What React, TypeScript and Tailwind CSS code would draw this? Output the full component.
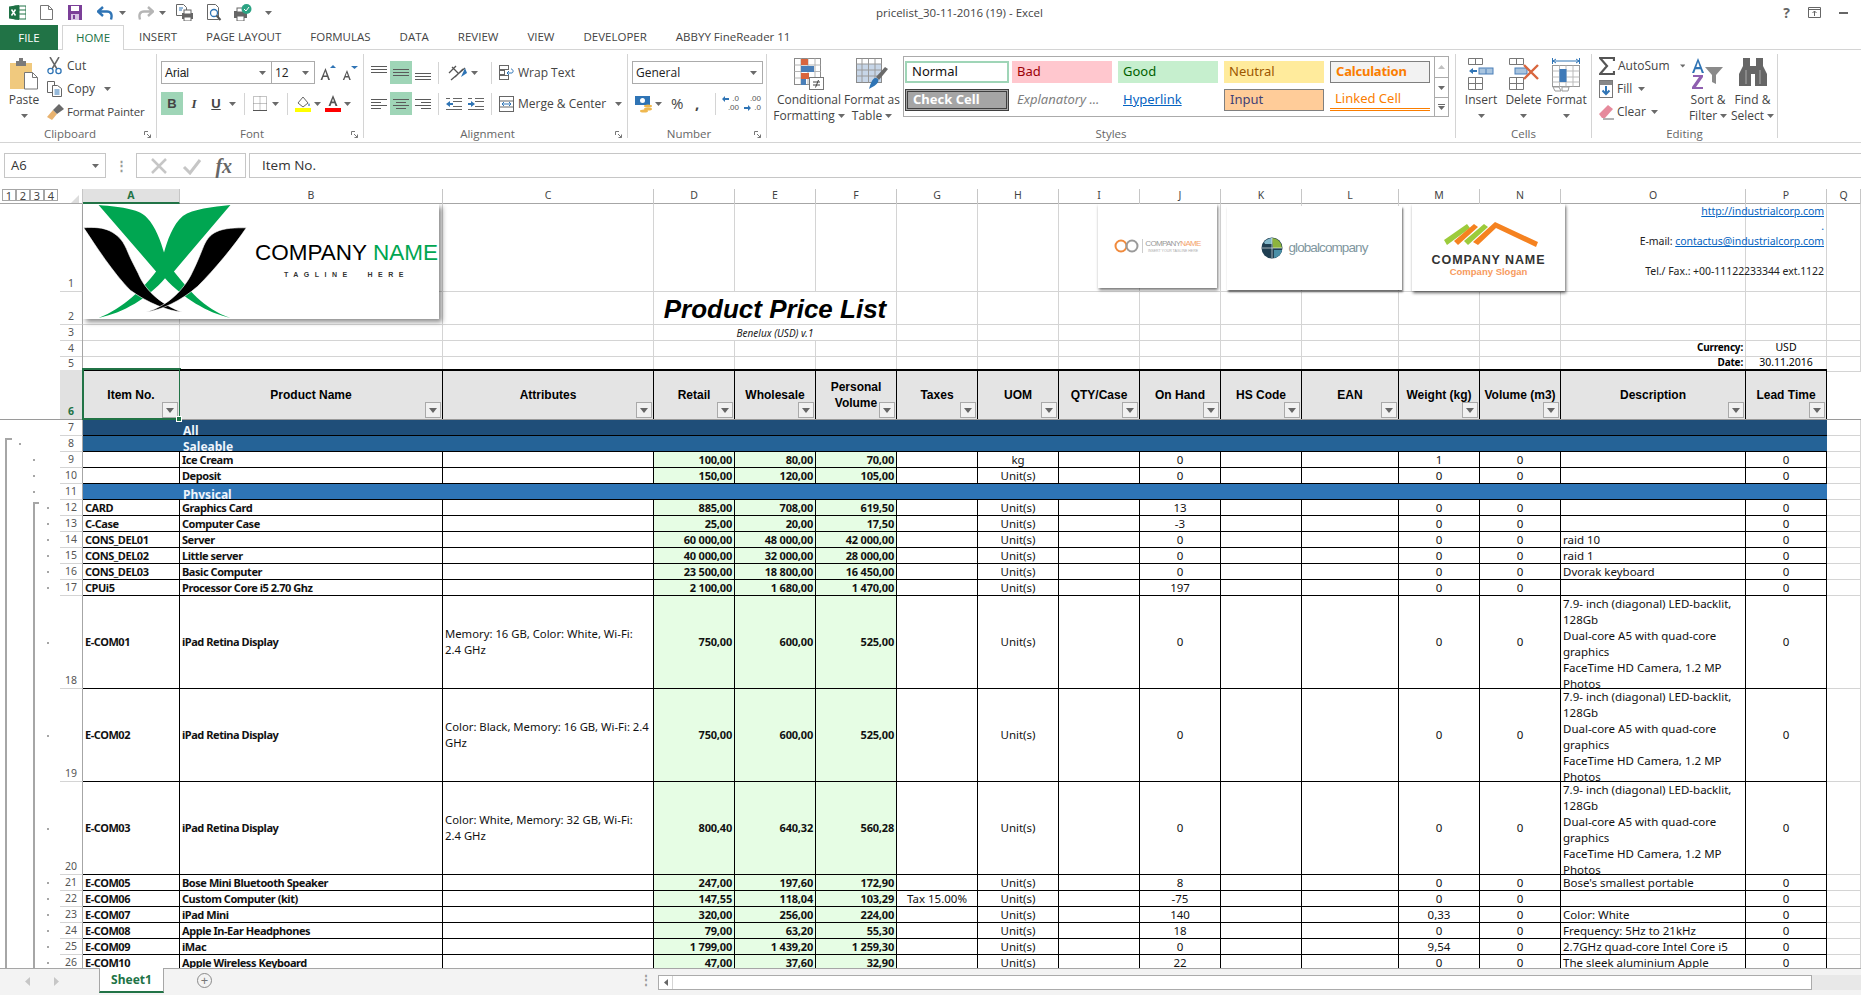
import React from "react";

const rowCols =
    "grid grid-cols-[60px_23px_97px_263px_211px_81px_81px_81px_81px_81px_81px_81px_81px_97px_81px_81px_185px_81px_1fr]";

const letters = ["A", "B", "C", "D", "E", "F", "G", "H", "I", "J", "K", "L", "M", "N", "O", "P", "Q"];
const headers = [
    "Item No.", "Product Name", "Attributes", "Retail", "Wholesale", "Personal Volume", "Taxes", "UOM",
    "QTY/Case", "On Hand", "HS Code", "EAN", "Weight (kg)", "Volume (m3)", "Description", "Lead Time",
];

const ipadDesc = [
    "7.9- inch (diagonal) LED-backlit,",
    "128Gb",
    "Dual-core A5 with quad-core",
    "graphics",
    "FaceTime HD Camera, 1.2 MP",
    "Photos",
];

type Row = {
    n: number;
    level: 1 | 2 | 3;
    tall?: boolean;
    cells: string[];
    desc?: string[];
};

const u = "Unit(s)";
const rows: Row[] = [
    { n: 9, level: 2, cells: ["", "Ice Cream", "", "100,00", "80,00", "70,00", "", "kg", "", "0", "", "", "1", "0", "", "0"] },
    { n: 10, level: 2, cells: ["", "Deposit", "", "150,00", "120,00", "105,00", "", u, "", "0", "", "", "0", "0", "", "0"] },
    { n: 0, level: 2, cells: ["Physical"] },
    { n: 12, level: 3, cells: ["CARD", "Graphics Card", "", "885,00", "708,00", "619,50", "", u, "", "13", "", "", "0", "0", "", "0"] },
    { n: 13, level: 3, cells: ["C-Case", "Computer Case", "", "25,00", "20,00", "17,50", "", u, "", "-3", "", "", "0", "0", "", "0"] },
    { n: 14, level: 3, cells: ["CONS_DEL01", "Server", "", "60 000,00", "48 000,00", "42 000,00", "", u, "", "0", "", "", "0", "0", "raid 10", "0"] },
    { n: 15, level: 3, cells: ["CONS_DEL02", "Little server", "", "40 000,00", "32 000,00", "28 000,00", "", u, "", "0", "", "", "0", "0", "raid 1", "0"] },
    { n: 16, level: 3, cells: ["CONS_DEL03", "Basic Computer", "", "23 500,00", "18 800,00", "16 450,00", "", u, "", "0", "", "", "0", "0", "Dvorak keyboard", "0"] },
    { n: 17, level: 3, cells: ["CPUi5", "Processor Core i5 2.70 Ghz", "", "2 100,00", "1 680,00", "1 470,00", "", u, "", "197", "", "", "0", "0", "", "0"] },
    { n: 18, level: 3, tall: true, desc: ipadDesc, cells: ["E-COM01", "iPad Retina Display", "Memory: 16 GB, Color: White, Wi-Fi:\n2.4 GHz", "750,00", "600,00", "525,00", "", u, "", "0", "", "", "0", "0", "", "0"] },
    { n: 19, level: 3, tall: true, desc: ipadDesc, cells: ["E-COM02", "iPad Retina Display", "Color: Black, Memory: 16 GB, Wi-Fi: 2.4\nGHz", "750,00", "600,00", "525,00", "", u, "", "0", "", "", "0", "0", "", "0"] },
    { n: 20, level: 3, tall: true, desc: ipadDesc, cells: ["E-COM03", "iPad Retina Display", "Color: White, Memory: 32 GB, Wi-Fi:\n2.4 GHz", "800,40", "640,32", "560,28", "", u, "", "0", "", "", "0", "0", "", "0"] },
    { n: 21, level: 3, cells: ["E-COM05", "Bose Mini Bluetooth Speaker", "", "247,00", "197,60", "172,90", "", u, "", "8", "", "", "0", "0", "Bose's smallest portable", "0"] },
    { n: 22, level: 3, cells: ["E-COM06", "Custom Computer (kit)", "", "147,55", "118,04", "103,29", "Tax 15.00%", u, "", "-75", "", "", "0", "0", "", "0"] },
    { n: 23, level: 3, cells: ["E-COM07", "iPad Mini", "", "320,00", "256,00", "224,00", "", u, "", "140", "", "", "0,33", "0", "Color: White", "0"] },
    { n: 24, level: 3, cells: ["E-COM08", "Apple In-Ear Headphones", "", "79,00", "63,20", "55,30", "", u, "", "18", "", "", "0", "0", "Frequency: 5Hz to 21kHz", "0"] },
    { n: 25, level: 3, cells: ["E-COM09", "iMac", "", "1 799,00", "1 439,20", "1 259,30", "", u, "", "0", "", "", "9,54", "0", "2.7GHz quad-core Intel Core i5", "0"] },
    { n: 26, level: 3, cells: ["E-COM10", "Apple Wireless Keyboard", "", "47,00", "37,60", "32,90", "", u, "", "22", "", "", "0", "0", "The sleek aluminium Apple", "0"] },
];

const Caret = ({ className = "" }: { className?: string }) => (
    <svg width="7" height="4" viewBox="0 0 7 4" className={className}>
        <path d="M0 0h7L3.500 4z" fill="#6a6a6a" />
    </svg>
);

const Lines = ({ items }: { items: [number, number, number][] }) => (
    <svg width="18" height="18" viewBox="0 0 18 18">
        {items.map(([x, y, w], i) => (
            <rect key={i} x={x} y={y} width={w} height="1" fill="#5a5a5a" />
        ))}
    </svg>
);

const Icon = ({ name }: { name: string }) => {
    switch (name) {
        case "excel":
            return (
                <svg width="17" height="15" viewBox="0 0 17 15">
                    <rect x="6" y="1" width="11" height="13" fill="#fff" stroke="#217346" />
                    <path d="M10 1v13M6 5h11M6 9h11" stroke="#217346" strokeWidth="1" />
                    <path d="M0 1.500L10 0v15L0 13.500z" fill="#1e7145" />
                    <path d="M2.500 4.500l4 6M6.500 4.500l-4 6" stroke="#fff" strokeWidth="1.500" />
                </svg>
            );
        case "new":
            return (
                <svg width="13" height="15" viewBox="0 0 13 15">
                    <path d="M.5.5h8l4 4v10H.5zM8.500.5v4h4" fill="#fff" stroke="#777" />
                </svg>
            );
        case "save":
            return (
                <svg width="14" height="15" viewBox="0 0 14 15">
                    <path d="M0 0h14v15H0z" fill="#7b3f98" />
                    <rect x="3" y="1" width="8" height="5" fill="#fff" />
                    <rect x="3" y="9" width="8" height="6" fill="#d8c4e4" />
                    <rect x="5" y="10" width="2" height="4" fill="#7b3f98" />
                </svg>
            );
        case "undo":
            return (
                <svg width="18" height="16" viewBox="0 0 18 16">
                    <path d="M6 2L1 6.500 6 11M2 6.500h8c4 0 5.500 3 4 8" fill="none" stroke="#2f74b5" strokeWidth="2.400" />
                </svg>
            );
        case "redo":
            return (
                <svg width="18" height="16" viewBox="0 0 18 16">
                    <path d="M12 2l5 4.500L12 11M16 6.500H8c-4 0-5.500 3-4 8" fill="none" stroke="#b5b5b5" strokeWidth="2.400" />
                </svg>
            );
        case "preview":
            return (
                <svg width="17" height="17" viewBox="0 0 17 17">
                    <path d="M.5.5h7l3 3v8H.5z" fill="#fff" stroke="#666" />
                    <rect x="6" y="9" width="11" height="6" fill="#666" />
                    <rect x="8" y="6" width="7" height="4" fill="#fff" stroke="#666" />
                    <rect x="8" y="13" width="7" height="4" fill="#fff" stroke="#666" />
                    <path d="M3 4h4M3 6h3" stroke="#2f74b5" />
                </svg>
            );
        case "print":
            return (
                <svg width="16" height="17" viewBox="0 0 16 17">
                    <path d="M.5.5h8l3 3v12H.5z" fill="#fff" stroke="#666" />
                    <circle cx="7" cy="9" r="3.500" fill="#fff" stroke="#2f74b5" strokeWidth="1.300" />
                    <path d="M9.500 11.500L13.500 16" stroke="#555" strokeWidth="2" />
                </svg>
            );
        case "spell":
            return (
                <svg width="18" height="17" viewBox="0 0 18 17">
                    <rect x="0" y="7" width="13" height="7" fill="#666" />
                    <rect x="3" y="4" width="7" height="4" fill="#fff" stroke="#666" />
                    <rect x="3" y="12" width="7" height="5" fill="#fff" stroke="#666" />
                    <circle cx="12.500" cy="5" r="5" fill="#2ba383" />
                    <path d="M10 5l2 2 3-4" fill="none" stroke="#fff" />
                </svg>
            );
        case "paste":
            return (
                <svg width="30" height="32" viewBox="0 0 30 32">
                    <path d="M1 5h22v26H1z" fill="#f0c97e" />
                    <rect x="7" y="3" width="10" height="5" fill="#7a7a7a" />
                    <rect x="10" y="0" width="4" height="4" fill="#7a7a7a" />
                    <path d="M15.500 14.500h8l5 5v11.500h-13z" fill="#fff" stroke="#777" />
                    <path d="M23.500 14.500v5h5" fill="none" stroke="#777" />
                </svg>
            );
        case "cut":
            return (
                <svg width="15" height="18" viewBox="0 0 15 18">
                    <path d="M3 0l7 12M12 0L5 12" stroke="#666" strokeWidth="1.500" />
                    <circle cx="3.500" cy="14" r="2.600" fill="none" stroke="#2f74b5" strokeWidth="1.300" />
                    <circle cx="11.500" cy="14" r="2.600" fill="none" stroke="#2f74b5" strokeWidth="1.300" />
                </svg>
            );
        case "copy":
            return (
                <svg width="15" height="16" viewBox="0 0 15 16">
                    <path d="M.5.5h7v11h-7z" fill="#fff" stroke="#666" />
                    <path d="M5.500 4.500h5l4 3v8h-9z" fill="#fff" stroke="#666" />
                    <path d="M7.500 9h5M7.500 11h5M7.500 13h5" stroke="#2f74b5" />
                </svg>
            );
        case "painter":
            return (
                <svg width="17" height="16" viewBox="0 0 17 16">
                    <path d="M0 13l6-7 4 4-5 6z" fill="#e9b36f" />
                    <path d="M6 6l6-6 5 5-7 5z" fill="#6a6a6a" />
                </svg>
            );
        case "growA":
            return (
                <svg width="16" height="17" viewBox="0 0 16 17">
                    <path d="M5.500 4L10 16H8.200l-1-3H3.300l-1 3H.5zM3.800 11.500h2.900L5.300 7.300z" fill="#555" />
                    <path d="M10 4l3-3 3 3z" fill="#2f74b5" />
                </svg>
            );
        case "shrinkA":
            return (
                <svg width="16" height="17" viewBox="0 0 16 17">
                    <path d="M5 6l3.800 10H7.300l-.9-2.500H3.200L2.300 16H.8zM3.700 12h2.200L4.800 8.800z" fill="#555" />
                    <path d="M9 2h7l-3.500 3z" fill="#2f74b5" />
                </svg>
            );
        case "borders":
            return (
                <svg width="14" height="15" viewBox="0 0 14 15">
                    <path d="M.5.500h13v14H.5zM7 .5v14M.5 7.500h13" fill="none" stroke="#8a8a8a" strokeDasharray="1 1" />
                    <path d="M0 14.500h14" stroke="#555" />
                </svg>
            );
        case "fill":
            return (
                <svg width="16" height="17" viewBox="0 0 16 17">
                    <path d="M3 8l5-6 5 6-5 4z" fill="#fff" stroke="#666" />
                    <path d="M14 8c1 2 1 3 0 3s-1-1 0-3z" fill="#2f74b5" />
                    <rect x="0" y="13" width="16" height="4" fill="#ffff00" />
                </svg>
            );
        case "fontColor":
            return (
                <svg width="16" height="17" viewBox="0 0 16 17">
                    <path d="M8 0l4.500 11H10.500l-1-2.800h-3l-1 2.800H3.500zM7 6.500h2L8 3.500z" fill="#555" fillRule="evenodd" />
                    <rect x="0" y="13" width="16" height="4" fill="#ff0000" />
                </svg>
            );
        case "orient":
            return (
                <svg width="22" height="18" viewBox="0 0 22 18">
                    <path d="M2 9l7-7M5 3l6 6M8 13l8-8M4 16l14-12" stroke="#555" strokeWidth="1.300" fill="none" />
                    <path d="M14 13l4-9 2 5z" fill="#2f74b5" />
                </svg>
            );
        case "outdent":
        case "indent":
            return (
                <svg width="16" height="12" viewBox="0 0 16 12">
                    <path d="M7 .5h9M7 3.500h9M7 8.500h9M0 11.500h16M0 .5h4" stroke="#666" />
                    {name === "outdent" ? <path d="M0 6l4-3v2h3v2H4v2z" fill="#2f74b5" /> : <path d="M7 6L3 3v2H0v2h3v2z" fill="#2f74b5" />}
                </svg>
            );
        case "wrap":
            return (
                <svg width="15" height="16" viewBox="0 0 15 16">
                    <rect x=".5" y=".5" width="9" height="4" fill="none" stroke="#666" />
                    <rect x=".5" y="5.500" width="5" height="4" fill="none" stroke="#666" />
                    <rect x=".5" y="10.500" width="9" height="4" fill="none" stroke="#666" />
                    <path d="M8 8h5c2-1 1-4-1-4M10 6L8 8l2 2" fill="none" stroke="#2f74b5" />
                </svg>
            );
        case "merge":
            return (
                <svg width="15" height="16" viewBox="0 0 15 16">
                    <rect x=".5" y=".5" width="14" height="15" fill="#fff" stroke="#666" />
                    <path d="M.5 5h14M.5 11h14" stroke="#666" />
                    <path d="M3 8h9M3 8l2-2M3 8l2 2M12 8l-2-2M12 8l-2 2" stroke="#2f74b5" fill="none" />
                </svg>
            );
        case "money":
            return (
                <svg width="18" height="18" viewBox="0 0 18 18">
                    <rect x="0" y="1" width="15" height="9" fill="#2f74b5" />
                    <circle cx="7.500" cy="5.500" r="2.500" fill="#fff" />
                    <ellipse cx="13" cy="11" rx="4" ry="1.500" fill="#efb84f" />
                    <ellipse cx="13" cy="14" rx="4" ry="1.500" fill="#efb84f" />
                    <ellipse cx="9" cy="16" rx="4" ry="1.500" fill="#efb84f" />
                </svg>
            );
        case "incDec":
            return (
                <div className="relative w-[17px] h-[17px] text-[8px] leading-[8px] text-[#555] font-['Liberation_Sans']">
                    <span className="absolute right-0 top-0">.0</span>
                    <span className="absolute right-0 bottom-0">.00</span>
                    <svg width="7" height="6" viewBox="0 0 7 6" className="absolute left-0 top-[1px]"><path d="M0 3l3-3v2h4v2H3v2z" fill="#2f74b5" /></svg>
                </div>
            );
        case "decDec":
            return (
                <div className="relative w-[17px] h-[17px] text-[8px] leading-[8px] text-[#555] font-['Liberation_Sans']">
                    <span className="absolute right-0 top-0">.00</span>
                    <span className="absolute right-0 bottom-0">.0</span>
                    <svg width="7" height="6" viewBox="0 0 7 6" className="absolute left-0 bottom-[1px]"><path d="M7 3L4 0v2H0v2h4v2z" fill="#2f74b5" /></svg>
                </div>
            );
        case "cond":
            return (
                <svg width="30" height="32" viewBox="0 0 30 32">
                    <rect x=".5" y=".5" width="26" height="26" fill="#fff" stroke="#8a8a8a" />
                    <path d="M7 .5v26M14 .5v26M21 .5v26M.5 7h26M.5 13.500h26M.5 20h26" stroke="#b5b5b5" />
                    <rect x="7" y="1" width="7" height="6" fill="#d9663e" />
                    <rect x="7" y="8" width="13" height="6" fill="#4a7fb8" />
                    <rect x="7" y="15" width="8" height="6" fill="#d9663e" />
                    <rect x="7" y="21" width="5" height="6" fill="#4a7fb8" />
                    <rect x="15.500" y="19.500" width="14" height="12" fill="#fff" stroke="#777" />
                    <path d="M19 24h7M19 27h7M24.500 22l-3 7.500" stroke="#444" fill="none" />
                </svg>
            );
        case "table":
            return (
                <svg width="32" height="32" viewBox="0 0 32 32">
                    <rect x=".5" y=".5" width="25" height="24" fill="#c7d6e8" stroke="#8a8a8a" />
                    <rect x="1" y="1" width="24" height="5" fill="#fff" />
                    <path d="M6 .5v24M12.500 .5v24M19 .5v24M.5 6h25M.5 12h25M.5 18h25" stroke="#9a9a9a" />
                    <path d="M29 9l3 2-9 11-3-3z" fill="#6a6a6a" />
                    <path d="M19 20c3 0 4 2 3 4-1 3-6 5-9 7 1-4 3-10 6-11z" fill="#2f74b5" />
                </svg>
            );
        case "insert":
            return (
                <svg width="27" height="32" viewBox="0 0 27 32">
                    <path d="M.5.5h14v6H.5zM7.500.5v6M.5 19.500h14v12H.5zM7.500 19.500v12M.5 25.500h14" fill="#fff" stroke="#777" />
                    <rect x="11" y="10" width="14" height="6" fill="#a8c4df" stroke="#4a7fb8" />
                    <path d="M18 11v5" stroke="#4a7fb8" />
                    <path d="M1 13l4-3v2h4v2H5v2z" fill="#2f74b5" />
                </svg>
            );
        case "delete":
            return (
                <svg width="30" height="32" viewBox="0 0 30 32">
                    <path d="M.5.5h14v6H.5zM7.500.5v6M.5 19.500h14v12H.5zM7.500 19.500v12M.5 25.500h14" fill="#fff" stroke="#777" />
                    <rect x="6" y="10" width="12" height="6" fill="#a8c4df" stroke="#4a7fb8" />
                    <path d="M15 7l14 14M29 7L15 21" stroke="#d9663e" strokeWidth="2.400" />
                </svg>
            );
        case "format":
            return (
                <svg width="29" height="34" viewBox="0 0 29 34">
                    <path d="M1 3h26M1 3l3-2M1 3l3 2M27 3l-3-2M27 3l-3 2M.5 0v6M27.500 0v6" stroke="#2f74b5" fill="none" />
                    <rect x=".5" y="7.500" width="27" height="21" fill="#fff" stroke="#999" />
                    <path d="M7.500 7.500v21M14 7.500v21M21 7.500v21M.5 13h27M.5 19h27M.5 24h27" stroke="#bbb" />
                    <rect x="7.500" y="11" width="7" height="13" fill="#3f7ab8" />
                    <path d="M1 29h6l2 4H3zM10 29h7l-1 4h-6z" fill="#fff" stroke="#999" />
                </svg>
            );
        case "sum":
            return (
                <svg width="16" height="18" viewBox="0 0 16 18">
                    <path d="M15 4V1H1l7 8-7 8h14v-3" fill="none" stroke="#555" strokeWidth="2.200" />
                </svg>
            );
        case "fillDown":
            return (
                <svg width="14" height="18" viewBox="0 0 14 18">
                    <rect x=".5" y=".5" width="13" height="17" fill="#fff" stroke="#777" />
                    <rect x="1" y="1" width="12" height="4" fill="#888" />
                    <path d="M7 6v8M3.500 10.500L7 14l3.500-3.500" fill="none" stroke="#2f74b5" strokeWidth="2" />
                </svg>
            );
        case "clear":
            return (
                <svg width="15" height="16" viewBox="0 0 15 16">
                    <path d="M0 10l9-9 5 4-8 9H3z" fill="#e68a9c" />
                    <path d="M4 15h11" stroke="#666" />
                </svg>
            );
        case "sort":
            return (
                <svg width="32" height="32" viewBox="0 0 32 32">
                    <path d="M6 0l6 15H9.800l-1.300-3.800H3.500L2.200 15H0zM4.300 9h3.400L6 4z" fill="#2f74b5" fillRule="evenodd" />
                    <path d="M1 17h10v2L4 29h7v2H0v-2l7-10H1z" fill="#8f5fb0" />
                    <path d="M13 9h18l-7 8v9l-4-2v-7z" fill="#8a8a8a" />
                </svg>
            );
        case "find":
            return (
                <svg width="28" height="28" viewBox="0 0 28 28">
                    <path d="M4 0h7v8h6V0h7v8l4 8v12H16V16h-4v12H0V16l4-8z" fill="#666" />
                    <path d="M7 12v14M21 12v14" stroke="#aaa" />
                </svg>
            );
        default:
            return null;
    }
};

const Group = ({ w, label, launcher, children }: { w: string; label: string; launcher?: boolean; children: React.ReactNode }) => (
    <div className={`${w} h-[84px] flex flex-col border-r border-[#d4d4d4] shrink-0`}>
        <div className="h-[72px] flex">{children}</div>
        <div className={`h-[12px] pt-[1px] flex justify-center relative text-[11.500px] leading-[14px] text-[#666] ${launcher ? "pr-[16px]" : ""}`}>
            {label}
            {launcher && (
                <svg width="7" height="7" viewBox="0 0 7 7" className="absolute right-[5px] top-[5px]">
                    <path d="M.5 4V.5H4M3 3l3.500 3.500M6.500 3.500v3h-3" fill="none" stroke="#777" />
                </svg>
            )}
        </div>
    </div>
);

const BigBtn = ({ icon, w, lines, caretInline }: { icon: string; w: string; lines: string[]; caretInline?: boolean }) => (
    <div className={`${w} flex flex-col items-center text-[12px] leading-[16px] text-[#444] shrink-0`}>
        <div className="h-[38px] pt-[4px] flex items-start justify-center">
            <Icon name={icon} />
        </div>
        {lines.map((l, i) => (
            <div key={l} className="whitespace-nowrap flex items-center gap-[3px]">
                {l}
                {caretInline && i === lines.length - 1 && <Caret />}
            </div>
        ))}
        {!caretInline && <Caret className="mt-[6px]" />}
    </div>
);

const SmallBtn = ({ icon, label, caret, gap = "gap-[5px]", labelClass = "" }: { icon: string; label: string; caret?: boolean; gap?: string; labelClass?: string }) => (
    <div className={`h-[23px] flex items-center ${gap} text-[12px] text-[#444] whitespace-nowrap`}>
        <Icon name={icon} />
        <span className={labelClass}>{label}</span>
        {caret && <Caret className="ml-[2px]" />}
    </div>
);

const Sep = () => <div className="w-[1px] h-[22px] bg-[#d4d4d4] shrink-0" />;

const AlignBtn = ({ items, on }: { items: [number, number, number][]; on?: boolean }) => (
    <div className={`w-[22px] h-[23px] flex items-center justify-center shrink-0 ${on ? "bg-[#9fd5b7]" : ""}`}>
        <Lines items={items} />
    </div>
);

const StyleCell = ({ children, className }: { children: React.ReactNode; className: string }) => (
    <div className={`h-[22px] flex items-center px-[5px] text-[13px] whitespace-nowrap ${className}`}>{children}</div>
);

const Ribbon = () => (
    <div className="h-[93px] pt-[4px] flex border-b border-[#d4d4d4] font-['Open_Sans',sans-serif]">
        <Group w="w-[157px]" label="Clipboard" launcher>
            <div className="w-[47px] pl-[3px]">
                <BigBtn icon="paste" w="w-[42px]" lines={["Paste"]} />
            </div>
            <div className="flex flex-col">
                <SmallBtn icon="cut" label="Cut" />
                <div className="flex items-center">
                    <SmallBtn icon="copy" label="Copy" />
                    <Caret className="ml-[9px]" />
                </div>
                <SmallBtn icon="painter" label="Format Painter" gap="gap-[3px]" labelClass="text-[11.500px] tracking-[-0.2px]" />
            </div>
        </Group>

        <Group w="w-[207px]" label="Font" launcher>
            <div className="pl-[4px] pt-[7px] flex flex-col gap-[8px]">
                <div className="h-[23px] flex items-center">
                    <div className="w-[111px] h-[23px] border border-[#ababab] flex items-center justify-between px-[3px] pr-[5px] font-['Liberation_Sans'] text-[12px] text-[#222]">
                        Arial
                        <Caret />
                    </div>
                    <div className="w-[43px] h-[23px] border border-l-0 border-[#ababab] flex items-center justify-between px-[3px] pr-[5px] text-[12px] text-[#222]">
                        12
                        <Caret />
                    </div>
                    <div className="ml-[5px] flex gap-[6px]">
                        <Icon name="growA" />
                        <Icon name="shrinkA" />
                    </div>
                </div>
                <div className="h-[23px] flex items-center text-[#444] font-['Liberation_Sans'] text-[13px]">
                    <div className="w-[22px] h-[23px] bg-[#9fd5b7] flex items-center justify-center font-bold">B</div>
                    <div className="w-[22px] text-center italic font-bold font-['Liberation_Serif']">I</div>
                    <div className="w-[22px] text-center underline font-bold">U</div>
                    <Caret className="mr-[8px] ml-[2px]" />
                    <Sep />
                    <div className="w-[42px] pl-[8px] flex items-center gap-[5px]">
                        <Icon name="borders" />
                        <Caret />
                    </div>
                    <Sep />
                    <div className="w-[34px] pl-[7px] flex items-center gap-[3px]">
                        <Icon name="fill" />
                        <Caret />
                    </div>
                    <div className="pl-[3px] flex items-center gap-[3px]">
                        <Icon name="fontColor" />
                        <Caret />
                    </div>
                </div>
            </div>
        </Group>

        <Group w="w-[264px]" label="Alignment" launcher>
            <div className="pl-[4px] pt-[7px] flex flex-col gap-[8px]">
                <div className="h-[23px] flex items-center">
                    <AlignBtn items={[[1, 2, 16], [1, 5, 16], [1, 8, 16]]} />
                    <AlignBtn on items={[[1, 5, 16], [1, 8, 16], [1, 11, 16]]} />
                    <AlignBtn items={[[1, 9, 16], [1, 12, 16], [1, 15, 16]]} />
                    <div className="w-[4px]" />
                    <Sep />
                    <div className="w-[52px] pl-[8px] flex items-center gap-[2px]">
                        <Icon name="orient" />
                        <Caret />
                    </div>
                    <Sep />
                    <div className="pl-[7px]">
                        <SmallBtn icon="wrap" label="Wrap Text" gap="gap-[4px]" />
                    </div>
                </div>
                <div className="h-[23px] flex items-center">
                    <AlignBtn items={[[1, 4, 16], [1, 7, 10], [1, 10, 16], [1, 13, 10]]} />
                    <AlignBtn on items={[[1, 4, 16], [4, 7, 10], [1, 10, 16], [4, 13, 10]]} />
                    <AlignBtn items={[[1, 4, 16], [7, 7, 10], [1, 10, 16], [7, 13, 10]]} />
                    <div className="w-[4px]" />
                    <Sep />
                    <div className="w-[52px] pl-[7px] flex items-center gap-[6px]">
                        <Icon name="outdent" />
                        <Icon name="indent" />
                    </div>
                    <Sep />
                    <div className="pl-[7px] flex items-center">
                        <SmallBtn icon="merge" label="Merge & Center" gap="gap-[4px]" />
                        <Caret className="ml-[9px]" />
                    </div>
                </div>
            </div>
        </Group>

        <Group w="w-[139px]" label="Number" launcher>
            <div className="pl-[4px] pt-[7px] flex flex-col gap-[8px]">
                <div className="w-[131px] h-[23px] border border-[#ababab] flex items-center justify-between px-[3px] pr-[5px] text-[12px] text-[#222]">
                    General
                    <Caret />
                </div>
                <div className="h-[23px] flex items-center text-[#444]">
                    <div className="w-[39px] pl-[3px] flex items-center gap-[2px]">
                        <Icon name="money" />
                        <Caret />
                    </div>
                    <span className="w-[24px] text-[15px]">%</span>
                    <span className="w-[20px] font-bold text-[15px]">,</span>
                    <Sep />
                    <div className="pl-[6px] flex gap-[5px]">
                        <Icon name="incDec" />
                        <Icon name="decDec" />
                    </div>
                </div>
            </div>
        </Group>

        <Group w="w-[689px]" label="Styles">
            <BigBtn icon="cond" w="w-[75px] pl-[9px]" lines={["Conditional", "Formatting"]} caretInline />
            <BigBtn icon="table" w="w-[60px]" lines={["Format as", "Table"]} caretInline />
            <div className="w-[546px] h-[61px] mt-[2px] ml-[1px] border border-[#ababab] flex justify-between">
                <div className="pl-[1px] pt-[4px] grid grid-cols-[101px_100px_100px_100px_100px] gap-x-[6px] gap-y-[6px] content-start font-['Noto_Sans',sans-serif]">
                    <StyleCell className="border-2 border-[#9fd5b7] text-[#111] -mr-[3px]">Normal</StyleCell>
                    <StyleCell className="bg-[#ffc7ce] text-[#9c0006]">Bad</StyleCell>
                    <StyleCell className="bg-[#c6efce] text-[#006100]">Good</StyleCell>
                    <StyleCell className="bg-[#ffeb9c] text-[#9c5700]">Neutral</StyleCell>
                    <StyleCell className="bg-[#f2f2f2] border border-[#7f7f7f] text-[#fa7d00] font-bold tracking-[-0.2px]">Calculation</StyleCell>
                    <StyleCell className="bg-[#a5a5a5] border-[3px] border-double border-[#3f3f3f] text-white font-bold -mr-[3px]">Check Cell</StyleCell>
                    <StyleCell className="italic text-[#7f7f7f]">Explanatory ...</StyleCell>
                    <StyleCell className="text-[#0563c1] underline">Hyperlink</StyleCell>
                    <StyleCell className="bg-[#ffcc99] border border-[#7f7f7f] text-[#3f3f76]">Input</StyleCell>
                    <StyleCell className="border-b-[3px] border-double border-[#fa7d00] text-[#fa7d00]">Linked Cell</StyleCell>
                </div>
                <div className="w-[14px] border-l border-[#ababab] flex flex-col">
                    <div className="h-[21px] border-b border-[#ababab] flex items-center justify-center">
                        <svg width="7" height="4" viewBox="0 0 7 4"><path d="M0 4h7L3.500 0z" fill="#c0c0c0" /></svg>
                    </div>
                    <div className="h-[20px] border-b border-[#ababab] flex items-center justify-center">
                        <Caret />
                    </div>
                    <div className="flex-1 flex flex-col items-center justify-center gap-[1px]">
                        <div className="w-[7px] h-[1px] bg-[#6a6a6a]" />
                        <Caret />
                    </div>
                </div>
            </div>
        </Group>

        <Group w="w-[136px]" label="Cells">
            <div className="pl-[4px] flex">
                <BigBtn icon="insert" w="w-[42px]" lines={["Insert"]} />
                <BigBtn icon="delete" w="w-[43px]" lines={["Delete"]} />
                <BigBtn icon="format" w="w-[43px]" lines={["Format"]} />
            </div>
        </Group>

        <Group w="w-[186px]" label="Editing">
            <div className="pl-[7px] w-[93px] flex flex-col shrink-0">
                <div className="flex items-center">
                    <SmallBtn icon="sum" label="AutoSum" gap="gap-[3px]" />
                    <Caret className="ml-[10px]" />
                </div>
                <SmallBtn icon="fillDown" label="Fill" caret gap="gap-[4px]" />
                <SmallBtn icon="clear" label="Clear" caret gap="gap-[3px]" />
            </div>
            <BigBtn icon="sort" w="w-[46px]" lines={["Sort &", "Filter"]} caretInline />
            <BigBtn icon="find" w="w-[43px]" lines={["Find &", "Select"]} caretInline />
        </Group>
    </div>
);

const FormulaBar = () => (
    <div className="mt-[10px] h-[25px] flex pl-[4px] text-[13px] text-[#333] font-['Open_Sans',sans-serif]">
        <div className="w-[102px] border border-[#c6c6c6] flex items-center justify-between pl-[6px] pr-[6px]">
            A6
            <Caret />
        </div>
        <div className="w-[30px] flex items-center justify-center text-[#999] font-bold">⋮</div>
        <div className="w-[110px] border border-[#c6c6c6] flex items-center justify-around px-[6px]">
            <svg width="18" height="18" viewBox="0 0 18 18"><path d="M2 2l14 14M16 2L2 16" stroke="#c6c6c6" strokeWidth="2.500" /></svg>
            <svg width="20" height="18" viewBox="0 0 20 18"><path d="M2 10l6 6L18 3" fill="none" stroke="#c6c6c6" strokeWidth="3" /></svg>
            <span className="font-['Liberation_Serif'] italic font-bold text-[20px] text-[#666]">fx</span>
        </div>
        <div className="flex-1 ml-[3px] border border-r-0 border-[#c6c6c6] flex items-center pl-[12px] text-[13.500px]">Item No.</div>
    </div>
);

const ColumnHeader = () => (
    <div className={`${rowCols} mt-[11px] h-[15px] shrink-0 border-b border-[#a6a6a6] text-[10.500px] leading-[13px] text-[#444] font-['Noto_Sans',sans-serif]`}>
        <div className="flex items-start pl-[2px] gap-0">
            {[1, 2, 3, 4].map((n) => (
                <div key={n} className="w-[14px] h-[12px] border border-[#a6a6a6] text-center leading-[11px] text-[11px]">{n}</div>
            ))}
        </div>
        <div className="flex justify-end items-end pr-[3px] pb-[1px] border-r border-[#c6c6c6]">
            <svg width="8" height="8" viewBox="0 0 8 8"><path d="M8 0v8H0z" fill="#dcdcdc" /></svg>
        </div>
        {letters.map((l, i) => (
            <div
                key={l}
                className={`text-center border-r border-[#c6c6c6] ${i === 0 ? "bg-[#e1e1e1] text-[#217346] font-bold border-b-2 border-b-[#217346]" : ""}`}
            >
                {l}
            </div>
        ))}
    </div>
);

const Gutter = ({ level }: { level?: 1 | 2 | 3 }) => (
    <div className="flex items-center">
        {level === 1 && <div className="ml-[19px] w-[2px] h-[2px] bg-[#a6a6a6]" />}
        {level === 2 && <div className="ml-[33px] w-[2px] h-[2px] bg-[#a6a6a6]" />}
        {level === 3 && <div className="ml-[47px] w-[2px] h-[2px] bg-[#a6a6a6]" />}
    </div>
);

const RowNum = ({ n, className = "" }: { n: number; className?: string }) => (
    <div className={`flex items-end justify-center border-r border-b border-[#d4d4d4] border-r-[#a6a6a6] text-[#555] text-[10.500px] leading-[15px] ${className}`}>{n}</div>
);

const Blank = ({ className = "" }: { className?: string }) => (
    <div className={`border-r border-b border-[#d4d4d4] ${className}`} />
);

const FilterBtn = () => (
    <div className="absolute right-[1px] bottom-[1px] w-[16px] h-[16px] bg-[#f1f1f1] border border-[#a9a9a9] flex items-center justify-center">
        <svg width="8" height="5" viewBox="0 0 8 5"><path d="M0 0h8L4 5z" fill="#666" /></svg>
    </div>
);

const TopRows = () => (
    <>
        <div className={`${rowCols} h-[88px]`}>
            <Gutter />
            <RowNum n={1} />
            {letters.slice(0, 15).map((l) => <Blank key={l} />)}
            <div className="border-r border-b border-[#d4d4d4] pr-[2px] flex flex-col items-end whitespace-nowrap text-[10.500px] tracking-[-0.05px] leading-[15px] text-[#222]">
                <a className="text-[#0563c1] underline">http://industrialcorp.com</a>
                <span className="text-[#0563c1]">.</span>
                <span>E-mail: <a className="text-[#0563c1] underline">contactus@industrialcorp.com</a></span>
                <span className="h-[15px]" />
                <span>Tel./ Fax.: +00-11122233344 ext.1122</span>
            </div>
            <Blank />
        </div>
        <div className={`${rowCols} h-[33px]`}>
            <Gutter />
            <RowNum n={2} />
            <Blank /><Blank /><Blank />
            <div className="col-span-3 border-r border-b border-[#d4d4d4] flex items-end justify-center font-['Liberation_Sans'] font-bold italic text-[26px] leading-[29px] whitespace-nowrap text-black">
                Product Price List
            </div>
            {letters.slice(6, 17).map((l) => <Blank key={l} />)}
        </div>
        <div className={`${rowCols} h-[15px]`}>
            <Gutter />
            <RowNum n={3} />
            <Blank /><Blank /><Blank />
            <div className="col-span-3 border-r border-b border-[#d4d4d4] flex items-center justify-center italic text-[10px] leading-[14px] text-[#222]">
                Benelux (USD) v.1
            </div>
            {letters.slice(6, 17).map((l) => <Blank key={l} />)}
        </div>
        <div className={`${rowCols} h-[15px]`}>
            <Gutter />
            <RowNum n={4} />
            {letters.slice(0, 14).map((l) => <Blank key={l} />)}
            <div className="border-r border-b border-[#d4d4d4] flex items-center justify-end pr-[2px] font-bold text-[10px] tracking-[-0.2px]">Currency:</div>
            <div className="border-r border-b border-[#d4d4d4] flex items-center justify-center text-[10.500px]">USD</div>
            <Blank />
        </div>
        <div className={`${rowCols} h-[15px]`}>
            <Gutter />
            <RowNum n={5} />
            {letters.slice(0, 14).map((l) => <Blank key={l} />)}
            <div className="border-r border-b border-[#d4d4d4] flex items-center justify-end pr-[2px] font-bold text-[10px] tracking-[-0.2px]">Date:</div>
            <div className="border-r border-b border-[#d4d4d4] flex items-center justify-center text-[10.500px]">30.11.2016</div>
            <Blank />
        </div>
    </>
);

const HeaderRow = () => (
    <div className={`${rowCols} h-[50px] border-b border-[#9a9a9a]`}>
        <Gutter />
        <div className="bg-[#e1e1e1] border-r border-[#a6a6a6] flex items-end justify-center text-[#217346] font-bold text-[10.500px] leading-[15px]">6</div>
        {headers.map((h, i) => (
            <div
                key={h}
                className={`relative bg-[#e4e4e4] border-t-2 border-t-black -mt-[1px] border-r border-r-black flex items-center justify-center text-center font-['Liberation_Sans'] font-bold text-[12px] leading-[16px] text-black ${
                    i === 0 ? "outline-2 -outline-offset-1 outline-[#217346]" : ""
                }`}
            >
                {h}
                <FilterBtn />
            </div>
        ))}
        <div />
    </div>
);

const Section = ({ n, label, bg, level }: { n: number; label: string; bg: string; level?: 1 | 2 }) => (
    <div className={`${rowCols} h-[16px]`}>
        <Gutter level={level} />
        <RowNum n={n} />
        <div className={`col-span-16 ${bg} border-b border-black overflow-hidden pl-[100px] pt-[4px] font-['Noto_Sans',sans-serif] font-bold text-[12px] leading-[14px] text-[#eef4fb]`}>
            {label}
        </div>
        <Blank />
    </div>
);

const priceIdx = [3, 4, 5];
const nameIdx = [0, 1];
const centerIdx = [6, 7, 8, 9, 10, 11, 12, 13, 15];

const DataRow = ({ row }: { row: Row }) => (
    <div className={`${rowCols} ${row.tall ? "h-[93px]" : "h-[16px]"}`}>
        <Gutter level={row.level} />
        <RowNum n={row.n} />
        {row.cells.map((c, i) => {
            const isPrice = priceIdx.includes(i);
            const isCenter = centerIdx.includes(i);
            const isDesc = i === 14;
            return (
                <div
                    key={i}
                    className={`overflow-hidden border-r border-b border-black px-[2px] whitespace-pre text-[#111] ${
                        row.tall ? "leading-[16px]" : "leading-[15px]"
                    } ${isDesc && row.desc ? "flex items-start" : "flex items-center"} ${isPrice ? "bg-[#e6fde4] justify-end font-bold tracking-[-0.2px] text-[11px]" : ""} ${
                        isCenter ? "justify-center" : ""
                    } ${nameIdx.includes(i) ? "font-bold tracking-[-0.45px] text-[11px]" : ""} ${
                        i === 2 ? "text-[11.300px]" : ""
                    } ${!isPrice && !nameIdx.includes(i) && i !== 2 ? "text-[11.500px]" : ""}`}
                >
                    {isDesc && row.desc ? <div>{row.desc.map((d) => <div key={d}>{d}</div>)}</div> : c}
                </div>
            );
        })}
        <Blank />
    </div>
);

const LogoMain = () => (
    <div className="absolute left-[83px] top-0 w-[356px] h-[115px] bg-white shadow-[3px_3px_5px_rgba(0,0,0,0.45)] flex">
        <svg width="166" height="115" viewBox="0 0 166 116" className="shrink-0">
            <path d="M15 1C40 3 58 6 64 14 72 22 78 38 81 49 84 38 90 20 100 12 110 5 130 3 148 1L91 68C105 85 120 105 148 115 125 110 100 95 82 75 65 95 40 110 15 115 40 105 60 85 73 68Z" fill="#00a651" />
            <path d="M0 24C10 23 20 24 26 27 34 31 39 36 43 45 47 55 51 62 55 70 61 85 75 100 99 109 85 108 65 100 47 87 30 70 12 42 0 24Z" fill="#000" stroke="#fff" strokeWidth=".6" />
            <path d="M164 24C154 24 142 24 134 28 127 31 123 37 120 45 116 55 113 62 108 72 101 85 87 102 63 109 78 107 98 98 115 83 132 66 152 42 164 24Z" fill="#000" stroke="#fff" strokeWidth=".6" />
        </svg>
        <div className="ml-[6px] pt-[37px] flex flex-col items-center font-['Liberation_Sans'] whitespace-nowrap">
            <div className="text-[22.500px] leading-[24px] text-black">
                COMPANY <span className="text-[#00a651]">NAME</span>
            </div>
            <div className="mt-[6px] text-[7px] leading-[8px] font-bold tracking-[5.500px] text-[#333]">TAGLINE&nbsp;&nbsp;HERE</div>
        </div>
    </div>
);

const LogoInfinity = () => (
    <div className="absolute left-[1098px] top-0 w-[119px] h-[84px] bg-white shadow-[1px_2px_3px_rgba(0,0,0,0.55)] flex items-center justify-center gap-[3px]">
        <svg width="25" height="16" viewBox="0 0 25 16">
            <circle cx="7" cy="8" r="5.500" fill="none" stroke="#f08a3c" strokeWidth="2" />
            <circle cx="18" cy="8" r="5.500" fill="none" stroke="#9a9a9a" strokeWidth="2" />
        </svg>
        <div className="flex flex-col items-center border-l border-[#ccc] pl-[2px] font-['Liberation_Sans']">
            <div className="text-[8px] leading-[10px] tracking-[-0.7px] text-[#999]">COMPANY<span className="text-[#f4a26b]">NAME</span></div>
            <div className="text-[3.500px] leading-[4px] text-[#aaa]">INSERT YOUR TAGLINE HERE</div>
        </div>
    </div>
);

const LogoGlobal = () => (
    <div className="absolute left-[1227px] top-[2px] w-[175px] h-[84px] bg-white shadow-[1px_2px_2px_rgba(0,0,0,0.6)] flex items-center justify-center gap-[5px]">
        <svg width="22" height="22" viewBox="0 0 22 22">
            <circle cx="11" cy="11" r="10.500" fill="#1f3f52" />
            <path d="M11 1a10 10 0 0 1 10 10h-9z" fill="#8db33e" />
            <path d="M3 5c3-3 6-4 8-4v6H4z" fill="#7fb6c9" />
            <path d="M13 13h8c-1 5-4 7-8 8z" fill="#4a90a8" />
            <path d="M1 11h20M11 1v20" stroke="#fff" strokeWidth=".6" />
        </svg>
        <span className="font-['Liberation_Sans'] text-[13.500px] tracking-[-0.9px] text-[#7f97a0]">globalcompany</span>
    </div>
);

const LogoRoof = () => (
    <div className="absolute left-[1412px] top-0 w-[153px] h-[87px] bg-white shadow-[1px_2px_3px_rgba(0,0,0,0.6)] flex flex-col items-center font-['Liberation_Sans'] whitespace-nowrap">
        <svg width="153" height="46" viewBox="0 0 153 46" className="shrink-0">
            <path d="M32 36L55 20l3 4-23 17z" fill="#9ccb3b" />
            <path d="M42 37L62 20l4 3-20 18z" fill="#f58220" />
            <path d="M52 37L72 20l4 3-20 18z" fill="#9ccb3b" />
            <path d="M61 38L83 18l43 20-2 5-40-19-18 17z" fill="#f58220" />
        </svg>
        <div className="mt-[4px] text-[12.500px] leading-[12px] font-bold tracking-[0.9px] text-[#333]">COMPANY NAME</div>
        <div className="mt-[1px] text-[9.500px] leading-[10px] font-bold text-[#f79a5d]">Company Slogan</div>
    </div>
);

const SheetTabs = () => (
    <div className="h-[27px] shrink-0 border-t border-[#a6a6a6] bg-[#f3f3f3] flex items-start relative z-10 font-['Noto_Sans',sans-serif]">
        <div className="w-[99px] h-[25px] flex items-center pl-[25px] gap-[24px] shrink-0">
            <svg width="5" height="9" viewBox="0 0 5 9"><path d="M5 0v9L0 4.500z" fill="#c6c6c6" /></svg>
            <svg width="5" height="9" viewBox="0 0 5 9"><path d="M0 0v9l5-4.500z" fill="#c6c6c6" /></svg>
        </div>
        <div className="w-[65px] h-[25px] -mt-[1px] bg-white border-x border-[#a6a6a6] border-b-2 border-b-[#217346] flex items-center justify-center font-bold text-[12px] text-[#217346] shrink-0">
            Sheet1
        </div>
        <div className="ml-[33px] mr-[428px] mt-[4px] w-[15px] h-[15px] rounded-full border border-[#8a8a8a] flex items-center justify-center text-[#777] text-[13px] leading-[13px] shrink-0">+</div>
        <div className="mt-[4px] text-[#999] text-[12px] leading-[14px] font-bold w-[18px] shrink-0">⋮</div>
        <div className="mt-[6px] w-[1154px] h-[15px] border border-[#ababab] bg-white flex items-center shrink-0">
            <div className="w-[14px] h-full border-r border-[#d4d4d4] flex items-center justify-center">
                <svg width="4" height="7" viewBox="0 0 4 7"><path d="M4 0v7L0 3.500z" fill="#666" /></svg>
            </div>
        </div>
        <div className="mt-[6px] flex-1 h-[15px] bg-[#e8e8e8]" />
    </div>
);

export default function App() {
    return (
        <div className="w-[1861px] h-[995px] overflow-hidden flex flex-col bg-white font-['Noto_Sans',sans-serif] text-[11px]">
            <div className="h-[25px] flex items-center shrink-0 font-['Open_Sans',sans-serif]">
                <div className="w-[876px] pl-[9px] flex items-center">
                    <Icon name="excel" />
                    <div className="ml-[14px]"><Icon name="new" /></div>
                    <div className="ml-[15px]"><Icon name="save" /></div>
                    <div className="ml-[15px]"><Icon name="undo" /></div>
                    <Caret className="ml-[4px]" />
                    <div className="ml-[10px]"><Icon name="redo" /></div>
                    <Caret className="ml-[5px]" />
                    <div className="ml-[10px]"><Icon name="preview" /></div>
                    <div className="ml-[14px]"><Icon name="print" /></div>
                    <div className="ml-[11px]"><Icon name="spell" /></div>
                    <Caret className="ml-[13px]" />
                </div>
                <span className="text-[11.500px] text-[#444]">pricelist_30-11-2016 (19) - Excel</span>
                <div className="ml-auto flex items-center pr-[13px] gap-[18px] text-[#666]">
                    <span className="font-bold text-[14px]">?</span>
                    <svg width="13" height="11" viewBox="0 0 13 11">
                        <path d="M.5.5h12v10H.5zM.5 2.500h12M6.500 9V4M4.500 6l2-2 2 2" fill="none" stroke="#666" />
                    </svg>
                    <div className="w-[9px] h-[2px] bg-[#666]" />
                </div>
            </div>

            <div className="h-[25px] flex items-end shrink-0 border-b border-[#d4d4d4] font-['Open_Sans',sans-serif] text-[11.500px] text-[#444]">
                <div className="w-[58px] h-[25px] -mb-[1px] bg-[#217346] text-white flex items-center justify-center">FILE</div>
                <div className="ml-[4px] w-[62px] h-[25px] -mb-[1px] bg-white border border-b-0 border-[#d4d4d4] text-[#217346] flex items-center justify-center">HOME</div>
                <div className="ml-[15px] h-[24px] flex items-center gap-[29px] whitespace-nowrap">
                    <span>INSERT</span>
                    <span>PAGE LAYOUT</span>
                    <span>FORMULAS</span>
                    <span>DATA</span>
                    <span>REVIEW</span>
                    <span>VIEW</span>
                    <span>DEVELOPER</span>
                    <span>ABBYY FineReader 11</span>
                </div>
            </div>

            <Ribbon />
            <FormulaBar />
            <ColumnHeader />

            <div className="flex-1 relative overflow-hidden">
                <TopRows />
                <HeaderRow />
                <Section n={7} label="All" bg="bg-[#1f4e79]" />
                <Section n={8} label="Saleable" bg="bg-[#256397]" level={1} />
                {rows.map((r) =>
                    r.n === 0 ? (
                        <Section key="physical" n={11} label="Physical" bg="bg-[#2e75b6]" level={2} />
                    ) : (
                        <DataRow key={r.n} row={r} />
                    )
                )}
                <LogoMain />
                <LogoInfinity />
                <LogoGlobal />
                <LogoRoof />
                <div className="absolute left-[5px] top-[234px] bottom-0 w-[7px] border-l-2 border-t-2 border-[#a6a6a6]" />
                <div className="absolute left-[33px] top-[298px] bottom-0 w-[6px] border-l-2 border-t-2 border-[#a6a6a6]" />
                <div className="absolute left-[176px] top-[212px] w-[6px] h-[6px] bg-[#217346] border border-white" />
            </div>

            <SheetTabs />
        </div>
    );
}
